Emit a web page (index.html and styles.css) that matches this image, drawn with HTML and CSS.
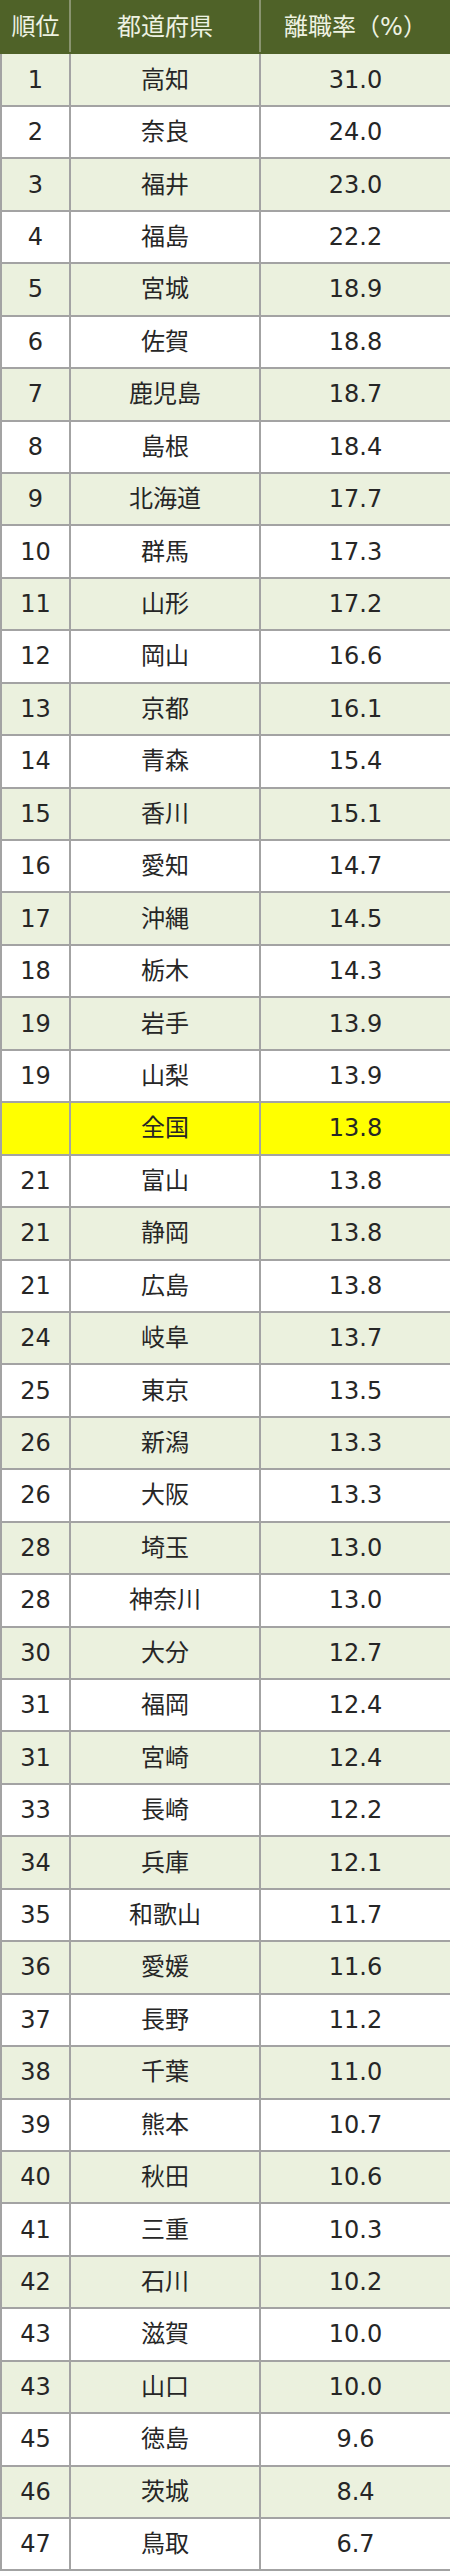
FILE: index.html
```html
<!DOCTYPE html>
<html lang="ja">
<head>
<meta charset="utf-8">
<link rel="stylesheet" href="styles.css">
</head>
<body>
<table class="rank">
<colgroup><col class="c1"><col class="c2"><col class="c3"></colgroup>
<thead>
<tr><th>順位</th><th>都道府県</th><th>離職率（%）</th></tr>
</thead>
<tbody>
<tr><td>1</td><td>高知</td><td>31.0</td></tr>
<tr><td>2</td><td>奈良</td><td>24.0</td></tr>
<tr><td>3</td><td>福井</td><td>23.0</td></tr>
<tr><td>4</td><td>福島</td><td>22.2</td></tr>
<tr><td>5</td><td>宮城</td><td>18.9</td></tr>
<tr><td>6</td><td>佐賀</td><td>18.8</td></tr>
<tr><td>7</td><td>鹿児島</td><td>18.7</td></tr>
<tr><td>8</td><td>島根</td><td>18.4</td></tr>
<tr><td>9</td><td>北海道</td><td>17.7</td></tr>
<tr><td>10</td><td>群馬</td><td>17.3</td></tr>
<tr><td>11</td><td>山形</td><td>17.2</td></tr>
<tr><td>12</td><td>岡山</td><td>16.6</td></tr>
<tr><td>13</td><td>京都</td><td>16.1</td></tr>
<tr><td>14</td><td>青森</td><td>15.4</td></tr>
<tr><td>15</td><td>香川</td><td>15.1</td></tr>
<tr><td>16</td><td>愛知</td><td>14.7</td></tr>
<tr><td>17</td><td>沖縄</td><td>14.5</td></tr>
<tr><td>18</td><td>栃木</td><td>14.3</td></tr>
<tr><td>19</td><td>岩手</td><td>13.9</td></tr>
<tr><td>19</td><td>山梨</td><td>13.9</td></tr>
<tr class="hl"><td></td><td>全国</td><td>13.8</td></tr>
<tr><td>21</td><td>富山</td><td>13.8</td></tr>
<tr><td>21</td><td>静岡</td><td>13.8</td></tr>
<tr><td>21</td><td>広島</td><td>13.8</td></tr>
<tr><td>24</td><td>岐阜</td><td>13.7</td></tr>
<tr><td>25</td><td>東京</td><td>13.5</td></tr>
<tr><td>26</td><td>新潟</td><td>13.3</td></tr>
<tr><td>26</td><td>大阪</td><td>13.3</td></tr>
<tr><td>28</td><td>埼玉</td><td>13.0</td></tr>
<tr><td>28</td><td>神奈川</td><td>13.0</td></tr>
<tr><td>30</td><td>大分</td><td>12.7</td></tr>
<tr><td>31</td><td>福岡</td><td>12.4</td></tr>
<tr><td>31</td><td>宮崎</td><td>12.4</td></tr>
<tr><td>33</td><td>長崎</td><td>12.2</td></tr>
<tr><td>34</td><td>兵庫</td><td>12.1</td></tr>
<tr><td>35</td><td>和歌山</td><td>11.7</td></tr>
<tr><td>36</td><td>愛媛</td><td>11.6</td></tr>
<tr><td>37</td><td>長野</td><td>11.2</td></tr>
<tr><td>38</td><td>千葉</td><td>11.0</td></tr>
<tr><td>39</td><td>熊本</td><td>10.7</td></tr>
<tr><td>40</td><td>秋田</td><td>10.6</td></tr>
<tr><td>41</td><td>三重</td><td>10.3</td></tr>
<tr><td>42</td><td>石川</td><td>10.2</td></tr>
<tr><td>43</td><td>滋賀</td><td>10.0</td></tr>
<tr><td>43</td><td>山口</td><td>10.0</td></tr>
<tr><td>45</td><td>徳島</td><td>9.6</td></tr>
<tr><td>46</td><td>茨城</td><td>8.4</td></tr>
<tr><td>47</td><td>鳥取</td><td>6.7</td></tr>
</tbody>
</table>
</body>
</html>
```
FILE: styles.css
```css
html, body {
  margin: 0;
  padding: 0;
  background: #ffffff;
}
.rank {
  width: 450px;
  border-collapse: collapse;
  table-layout: fixed;
  font-family: "DejaVu Sans", "Noto Sans CJK JP", sans-serif;
  font-size: 24px;
  color: #262626;
}
.c1 { width: 69px; }
.c2 { width: 190px; }
.c3 { width: 191px; }
.rank th, .rank td {
  height: 52.45px;
  padding: 0;
  text-align: center;
  vertical-align: middle;
  border: 2px solid #a3a3a3;
  box-sizing: border-box;
  line-height: 1;
}
.rank th {
  background: #4f6228;
  color: #eef2e2;
  font-weight: normal;
  border-color: #4f6228;
  border-right-color: #8a9470;
}
.rank th:last-child { border-right-color: #4f6228; }
.rank tbody tr:nth-child(odd) td { background: #ebf1de; }
.rank tbody tr:nth-child(even) td { background: #ffffff; }
.rank tbody tr.hl td { background: #ffff00; }
```
